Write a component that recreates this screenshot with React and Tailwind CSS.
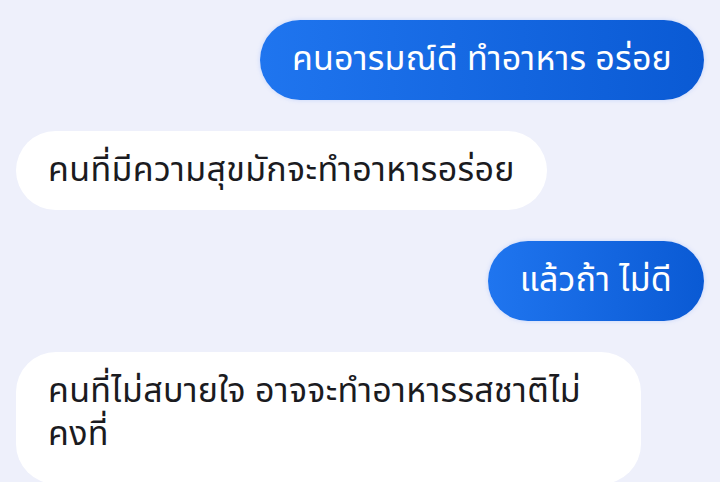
import React from 'react';

const font = { fontFamily: '"Noto Sans Thai", "Noto Sans", "DejaVu Sans", sans-serif' };

const Bubble = ({ mine, wide, children }) => (
  <div className={mine ? 'flex justify-end' : 'flex justify-start'}>
    <div
      className={
        mine
          ? 'rounded-[40px] bg-linear-to-r from-[#1f75ef] to-[#0a5ad4] px-8 py-[18px] text-[34px] leading-[44px] tracking-[0.2px] text-white shadow-[0_0_4px_rgba(120,160,255,0.35)]'
          : wide
            ? 'w-[625px] rounded-[40px] bg-white px-8 pt-[18px] pb-7 text-[34px] leading-[43px] tracking-[0.3px] text-[#1b1b1f]'
            : 'rounded-[40px] bg-white px-8 py-[18px] text-[34px] leading-[43px] tracking-[0.35px] text-[#1b1b1f]'
      }
    >
      {children}
    </div>
  </div>
);

export default function App() {
  return (
    <div className="h-[482px] w-[720px] overflow-hidden bg-[#eef0fb]" style={font}>
      <div className="flex flex-col gap-[31px] px-4 pt-5">
        <Bubble mine>คนอารมณ์ดี ทำอาหาร อร่อย</Bubble>
        <Bubble>คนที่มีความสุขมักจะทำอาหารอร่อย</Bubble>
        <Bubble mine>แล้วถ้า ไม่ดี</Bubble>
        <Bubble wide>
          คนที่ไม่สบายใจ อาจจะทำอาหารรสชาติไม่
          <br />
          คงที่
        </Bubble>
      </div>
    </div>
  );
}
